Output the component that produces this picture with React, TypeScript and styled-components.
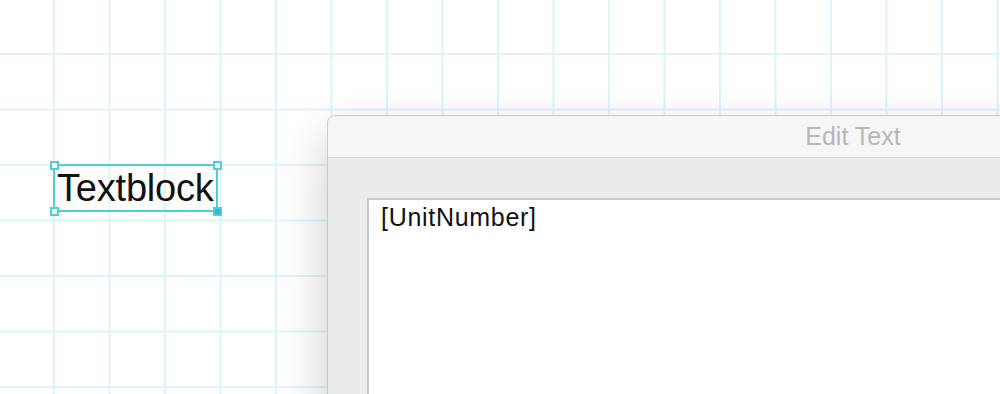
import styled, { createGlobalStyle } from 'styled-components';

const GlobalStyle = createGlobalStyle`
  html, body {
    margin: 0;
    padding: 0;
    overflow: hidden;
  }
  body {
    font-family: 'Liberation Sans', Arial, sans-serif;
  }
`;

const GRID = '#dbf5f9';

const Canvas = styled.div`
  position: relative;
  width: 1000px;
  height: 394px;
  overflow: hidden;
  background-color: #fff;
  background-image: linear-gradient(to right, ${GRID} 2px, transparent 2px),
    linear-gradient(to bottom, ${GRID} 2px, transparent 2px);
  background-size: 55.5px 55.5px;
  background-position: 53px 53px;
`;

// selected text node on the canvas
const TextNode = styled.div`
  position: absolute;
  left: 53px;
  top: 164px;
  width: 165px;
  height: 48px;
  box-sizing: border-box;
  border: 2px solid #4ccfd6;
  display: flex;
  align-items: center;
  padding-left: 2px;
  font-size: 38px;
  letter-spacing: -0.2px;
  color: #111;
`;

const Handle = styled.span<{ $x: 'l' | 'r'; $y: 't' | 'b'; $active?: boolean }>`
  position: absolute;
  width: 9px;
  height: 9px;
  box-sizing: border-box;
  border: 2px solid #4ccfd6;
  background: ${(p) => (p.$active ? '#3aaedc' : '#fff')};
  ${(p) => (p.$x === 'l' ? 'left: -5.5px;' : 'right: -5.5px;')}
  ${(p) => (p.$y === 't' ? 'top: -5.5px;' : 'bottom: -5.5px;')}
`;

const Dialog = styled.div`
  position: absolute;
  left: 327px;
  top: 115px;
  width: 1052px;
  height: 420px;
  box-sizing: border-box;
  border: 1px solid #c9c9c9;
  border-radius: 8px 8px 0 0;
  background: #ececec;
  box-shadow: 0 20px 50px rgba(0, 0, 0, 0.2);
  display: flex;
  flex-direction: column;
  overflow: hidden;
`;

const TitleBar = styled.div`
  height: 41px;
  flex-shrink: 0;
  background: #f6f6f6;
  border-bottom: 1px solid #d3d3d3;
  display: flex;
  align-items: center;
  justify-content: center;
  font-size: 25px;
  color: #b7b7b7;
`;

const Body = styled.div`
  flex: 1;
  padding: 40px 0 0 39px;
`;

const TextArea = styled.div`
  height: 100%;
  box-sizing: border-box;
  background: #fff;
  border-top: 2px solid #cbcbcb;
  border-left: 2px solid #c6c6c6;
  padding: 3px 12px;
  font-size: 25px;
  letter-spacing: 0.7px;
  color: #111;
`;

const App = () => {
  return (
    <>
      <GlobalStyle />
      <Canvas>
        <TextNode>
          Textblock
          <Handle $x='l' $y='t' />
          <Handle $x='r' $y='t' />
          <Handle $x='l' $y='b' />
          <Handle $x='r' $y='b' $active />
        </TextNode>
        <Dialog>
          <TitleBar>Edit Text</TitleBar>
          <Body>
            <TextArea>[UnitNumber]</TextArea>
          </Body>
        </Dialog>
      </Canvas>
    </>
  );
};

export default App;
